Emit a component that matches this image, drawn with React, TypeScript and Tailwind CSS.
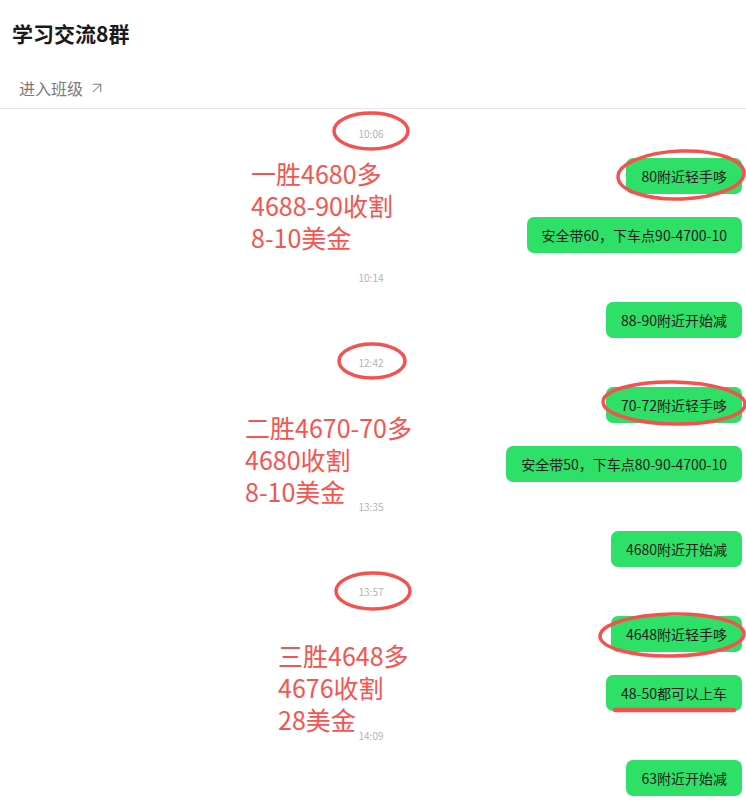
import { ArrowUpRight } from 'lucide-react'

const FONT = { fontFamily: '"Noto Sans CJK SC", "Noto Sans", sans-serif' }

type Item = { kind: 'time' | 'msg'; text: string }

const CHAT: Item[] = [
  { kind: 'time', text: '10:06' },
  { kind: 'msg', text: '80附近轻手哆' },
  { kind: 'msg', text: '安全带60，下车点90-4700-10' },
  { kind: 'time', text: '10:14' },
  { kind: 'msg', text: '88-90附近开始减' },
  { kind: 'time', text: '12:42' },
  { kind: 'msg', text: '70-72附近轻手哆' },
  { kind: 'msg', text: '安全带50，下车点80-90-4700-10' },
  { kind: 'time', text: '13:35' },
  { kind: 'msg', text: '4680附近开始减' },
  { kind: 'time', text: '13:57' },
  { kind: 'msg', text: '4648附近轻手哆' },
  { kind: 'msg', text: '48-50都可以上车' },
  { kind: 'time', text: '14:09' },
  { kind: 'msg', text: '63附近开始减' },
]

// red hand-written notes drawn over the screenshot
const NOTES = [
  { top: 'top-[157px]', left: 'left-[251px]', lines: ['一胜4680多', '4688-90收割', '8-10美金'] },
  { top: 'top-[411px]', left: 'left-[245px]', lines: ['二胜4670-70多', '4680收割', '8-10美金'] },
  { top: 'top-[639px]', left: 'left-[278px]', lines: ['三胜4648多', '4676收割', '28美金'] },
]

function Chat() {
  return (
    <div className="flex flex-col pr-1">
      {CHAT.map((item, i) => {
        if (item.kind === 'time') {
          return (
            <div key={i} className="h-[49px] flex items-center justify-center">
              <span className="text-[10px] leading-[14px] text-[#b3b3b3]">{item.text}</span>
            </div>
          )
        }
        const prevMsg = i > 0 && CHAT[i - 1].kind === 'msg'
        return (
          <div key={i} className={`flex justify-end ${prevMsg ? 'mt-[23px]' : ''}`}>
            <div className="h-9 flex items-center px-[15px] rounded-[7px] bg-[#2ee067] text-[14px] text-[#1c1c1c]">
              {item.text}
            </div>
          </div>
        )
      })}
    </div>
  )
}

export default function App() {
  return (
    <div className="relative w-[746px] h-[812px] overflow-hidden bg-white" style={FONT}>
      <div className="h-[68px] flex items-center pl-3">
        <h1 className="text-[21px] font-bold text-[#1a1a1a]">学习交流8群</h1>
      </div>
      <div className="h-[41px] flex items-center gap-[5px] pl-[19px] border-b border-[#e6e6e6] text-[#7a7a7a]">
        <span className="text-[16px]">进入班级</span>
        <ArrowUpRight size={18} strokeWidth={1.4} className="text-[#808080]" />
      </div>
      <Chat />

      {NOTES.map((n, i) => (
        <div key={i} className={`absolute ${n.top} ${n.left} flex flex-col text-[25px] leading-[32px] text-[#f9534f]`}>
          {n.lines.map((l) => (
            <div key={l} className="h-8">{l}</div>
          ))}
        </div>
      ))}

      <svg className="absolute top-0 left-0 pointer-events-none" width="746" height="812" viewBox="0 0 746 812">
        <g fill="none" stroke="#f5514f" strokeWidth="3.5" strokeLinecap="round">
          <ellipse cx="371" cy="131" rx="37" ry="18" />
          <ellipse cx="681" cy="175" rx="63" ry="24" transform="rotate(-2 681 175)" />
          <ellipse cx="372" cy="361" rx="33" ry="17" />
          <ellipse cx="674" cy="403" rx="71" ry="21" transform="rotate(1 674 403)" />
          <ellipse cx="373" cy="591" rx="37" ry="18" />
          <ellipse cx="672" cy="635" rx="72" ry="21" transform="rotate(-1 672 635)" />
          <line x1="615" y1="710" x2="734" y2="710" strokeWidth="4.5" />
        </g>
      </svg>
    </div>
  )
}
